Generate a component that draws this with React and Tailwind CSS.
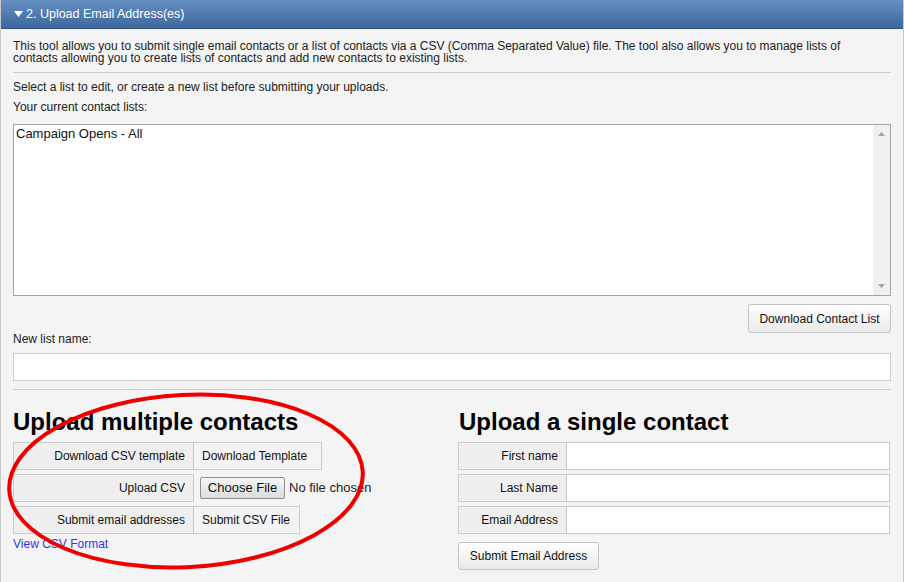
const font = { fontFamily: '"Liberation Sans", Arial, sans-serif' };

function LabelRow({ label, labelWidth, children }) {
  return (
    <div className="flex h-[28px]">
      <div
        className={`${labelWidth} flex items-center justify-end border border-[#cccccc] bg-[#efefef] pr-2 text-[12px] text-[#111]`}
      >
        {label}
      </div>
      {children}
    </div>
  );
}

function CellButton({ children, width }) {
  return (
    <div
      className={`${width} -ml-px flex items-center border border-[#cccccc] bg-[#f4f4f4] pl-2 text-[12px] text-[#111]`}
    >
      {children}
    </div>
  );
}

function InputCell() {
  return <div className="-ml-px flex-1 border border-[#cccccc] bg-white" />;
}

function GradButton({ children, className = '' }) {
  return (
    <button
      className={`rounded-[3px] border border-[#c4c4c4] bg-gradient-to-b from-white to-[#e9e9e9] text-[12px] text-[#111] ${className}`}
    >
      {children}
    </button>
  );
}

export default function App() {
  return (
    <div className="relative h-[582px] w-[904px] overflow-hidden bg-white" style={font}>
      <div className="h-full border-x border-[#c8c8c8] bg-[#f4f4f4]">
        {/* header */}
        <div className="flex h-[29px] items-center border-b border-[#2e4f7c] bg-gradient-to-b from-[#6590c2] to-[#3e689e] pl-[13px] text-[12.5px] text-white">
          <svg width="9" height="6" viewBox="0 0 9 6" className="mr-[3px]">
            <path d="M0 0h9L4.5 6z" fill="#fff" />
          </svg>
          2. Upload Email Address(es)
        </div>

        <div className="px-3 text-[12px] text-[#222]">
          <p className="w-[862px] pt-[11px] leading-[12px]">
            This tool allows you to submit single email contacts or a list of contacts via a CSV (Comma Separated Value) file. The tool also allows you to manage lists of contacts allowing you to create lists of contacts and add new contacts to existing lists.
          </p>
          <div className="mt-[8px] h-px bg-[#cccccc]" />

          <p className="mt-[7px] leading-[14px]">Select a list to edit, or create a new list before submitting your uploads.</p>
          <p className="mt-[6px] leading-[14px]">Your current contact lists:</p>

          {/* list box */}
          <div className="mt-[10px] flex h-[172px] border border-[#a5a5a5] bg-white">
            <div className="flex-1 pl-[2px] pt-[1px] text-[13px] leading-[16px] text-[#111]">Campaign Opens - All</div>
            <div className="flex w-[17px] flex-col justify-between bg-[#f0f0f0] py-[6px]">
              <svg width="17" height="5" viewBox="0 0 17 5">
                <path d="M5 5h7L8.5 1z" fill="#a3a3a3" />
              </svg>
              <svg width="17" height="5" viewBox="0 0 17 5">
                <path d="M5 0h7L8.5 4z" fill="#a3a3a3" />
              </svg>
            </div>
          </div>

          <div className="mt-[8px] flex justify-end">
            <GradButton className="h-[29px] w-[143px] text-[12.5px]">Download Contact List</GradButton>
          </div>

          <p className="leading-[12px]">New list name:</p>
          <div className="mt-[8px] h-[28px] border border-[#cccccc] bg-white" />
          <div className="mt-[8px] h-px bg-[#cccccc]" />

          {/* two columns */}
          <div className="mt-[18px] flex">
            <div className="w-[445px]">
              <h2 className="text-[24px] font-bold leading-[28px] text-black">Upload multiple contacts</h2>
              <div className="mt-[6px] flex flex-col gap-[4px]">
                <LabelRow label="Download CSV template" labelWidth="w-[181px]">
                  <CellButton width="w-[129px]">Download Template</CellButton>
                </LabelRow>
                <LabelRow label="Upload CSV" labelWidth="w-[181px]">
                  <div className="flex items-center pl-[6px]">
                    <button className="h-[22px] w-[85px] rounded-[2px] border border-[#8f8f8f] bg-gradient-to-b from-[#f6f6f6] to-[#dcdcdc] text-[13px] text-[#111]">
                      Choose File
                    </button>
                    <span className="ml-[4px] text-[13px] text-[#222]">No file chosen</span>
                  </div>
                </LabelRow>
                <LabelRow label="Submit email addresses" labelWidth="w-[181px]">
                  <CellButton width="w-[107px]">Submit CSV File</CellButton>
                </LabelRow>
              </div>
              <a className="mt-[3px] block text-[12px] leading-[14px] text-[#3333ee]">View CSV Format</a>
            </div>

            <div className="flex-1">
              <h2 className="pl-px text-[24px] font-bold leading-[28px] text-black">Upload a single contact</h2>
              <div className="mt-[6px] flex flex-col gap-[4px] pr-px">
                <LabelRow label="First name" labelWidth="w-[109px]">
                  <InputCell />
                </LabelRow>
                <LabelRow label="Last Name" labelWidth="w-[109px]">
                  <InputCell />
                </LabelRow>
                <LabelRow label="Email Address" labelWidth="w-[109px]">
                  <InputCell />
                </LabelRow>
              </div>
              <GradButton className="mt-[8px] h-[28px] w-[141px]">Submit Email Address</GradButton>
            </div>
          </div>
        </div>
      </div>

      {/* hand-drawn highlight ellipse */}
      <svg className="pointer-events-none absolute left-0 top-0" width="904" height="582">
        <ellipse
          cx="186"
          cy="481"
          rx="177"
          ry="86"
          transform="rotate(-3 186 481)"
          fill="none"
          stroke="#ee0000"
          strokeWidth="4"
        />
      </svg>
    </div>
  );
}
